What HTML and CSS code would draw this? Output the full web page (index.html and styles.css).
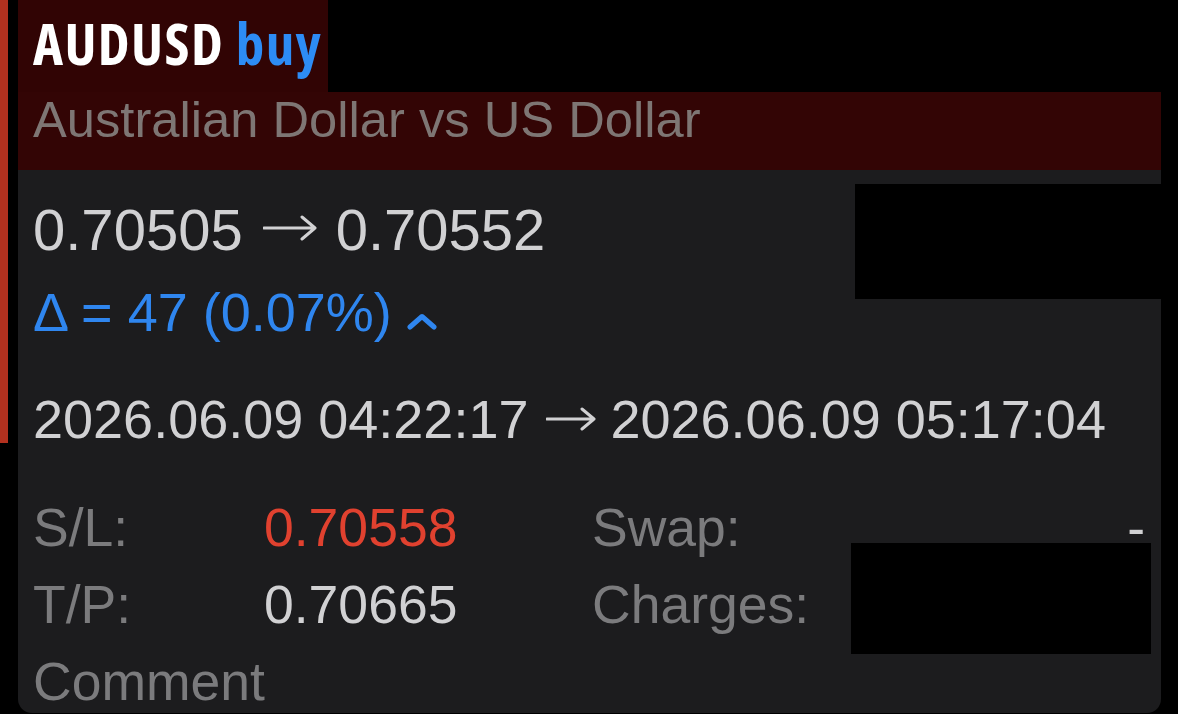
FILE: index.html
```html
<!DOCTYPE html>
<html lang="en">
<head>
  <meta charset="UTF-8">
  <meta name="viewport" content="width=device-width, initial-scale=1.0">
  <title>AUDUSD buy</title>
  <link rel="stylesheet" href="styles.css">
</head>
<body>
  <div class="page">
    <div class="accent"></div>
    <div class="panel">
      <h1 class="title">AUDUSD <span class="side">buy</span></h1>
      <div class="subtitle">Australian Dollar vs US Dollar</div>

      <div class="card">
        <div class="prices">
          0.70505<svg class="arrow" width="54" height="26" viewBox="0 0 54 26">
            <path d="M1 13 H52 M39 2 L52 13 L39 24" fill="none" stroke="#d1d1d3" stroke-width="3" stroke-linecap="round" stroke-linejoin="round"/>
          </svg>0.70552
        </div>
        <div class="delta">
          &Delta; = 47 (0.07%)
          <svg class="chevron" width="30" height="20" viewBox="0 0 30 20">
            <path d="M3 15 L15 4.5 L27 15" fill="none" stroke="#2f86ef" stroke-width="5" stroke-linecap="round" stroke-linejoin="round"/>
          </svg>
        </div>
        <div class="times">
          2026.06.09 04:22:17<svg class="arrow small" width="50" height="24" viewBox="0 0 50 24">
            <path d="M1 12 H48 M36 2 L48 12 L36 22" fill="none" stroke="#d1d1d3" stroke-width="3" stroke-linecap="round" stroke-linejoin="round"/>
          </svg>2026.06.09 05:17:04
        </div>

        <div class="details">
          <span class="label">S/L:</span>
          <span class="value loss">0.70558</span>
          <span class="label">Swap:</span>
          <span class="value right">-</span>

          <span class="label">T/P:</span>
          <span class="value">0.70665</span>
          <span class="label">Charges:</span>
          <span class="value right"></span>

          <span class="label comment">Comment</span>
        </div>

        <!-- hidden values -->
        <div class="redact redact-profit"></div>
        <div class="redact redact-charges"></div>
      </div>
    </div>
  </div>
</body>
</html>
```

FILE: styles.css
```css
body {
  margin: 0;
  background: #000;
  font-family: 'Liberation Sans', Arial, sans-serif;
  overflow: hidden;
}

.page {
  display: flex;
  align-items: flex-start;
  gap: 10px;
}

.accent {
  width: 8px;
  height: 443px;
  background-color: #b3311f;
}

.panel {
  display: flex;
  flex-direction: column;
  width: 1143px;
}

.title {
  align-self: flex-start;
  box-sizing: border-box;
  margin: 0;
  padding: 0 6px 0 15px;
  height: 92px;
  line-height: 86px;
  font-family: 'Open Sans', 'Liberation Sans', sans-serif;
  font-stretch: 75%;
  font-size: 57px;
  font-weight: bold;
  letter-spacing: 1.4px;
  color: #fff;
  background-color: #310404;
}

.title .side {
  color: #2d8cf5;
}

.subtitle {
  box-sizing: border-box;
  height: 78px;
  padding-left: 15px;
  line-height: 56px;
  font-size: 50.7px;
  color: #7e7674;
  background-color: #330505;
}

.card {
  position: relative;
  box-sizing: border-box;
  height: 543px;
  padding: 25px 16px 0 15px;
  background-color: #1c1c1e;
  border-radius: 0 0 14px 14px;
  overflow: hidden;
  color: #d1d1d3;
}

.prices {
  font-size: 58px;
  line-height: 70px;
}

.arrow {
  margin: 0 19px 0 20px;
  vertical-align: 9px;
}

.arrow.small {
  margin: 0 14px 0 18px;
  vertical-align: 7px;
}

.delta {
  margin-top: 15px;
  font-size: 54px;
  line-height: 64px;
  color: #2f86ef;
}

.chevron {
  vertical-align: -1px;
}

.times {
  margin-top: 43px;
  font-size: 54px;
  line-height: 64px;
}

.details {
  display: grid;
  grid-template-columns: 231px 328px auto 1fr;
  grid-auto-rows: 77px;
  margin-top: 38px;
  font-size: 53.5px;
  line-height: 77px;
}

.label {
  color: #7b7b7d;
}

.value.loss {
  color: #e0412f;
}

.value.right {
  text-align: right;
}

.comment {
  grid-column: 1 / span 2;
}

.redact {
  position: absolute;
  background-color: #000;
}

.redact-profit {
  top: 14px;
  left: 837px;
  width: 306px;
  height: 115px;
}

.redact-charges {
  top: 373px;
  left: 833px;
  width: 300px;
  height: 111px;
}
```
